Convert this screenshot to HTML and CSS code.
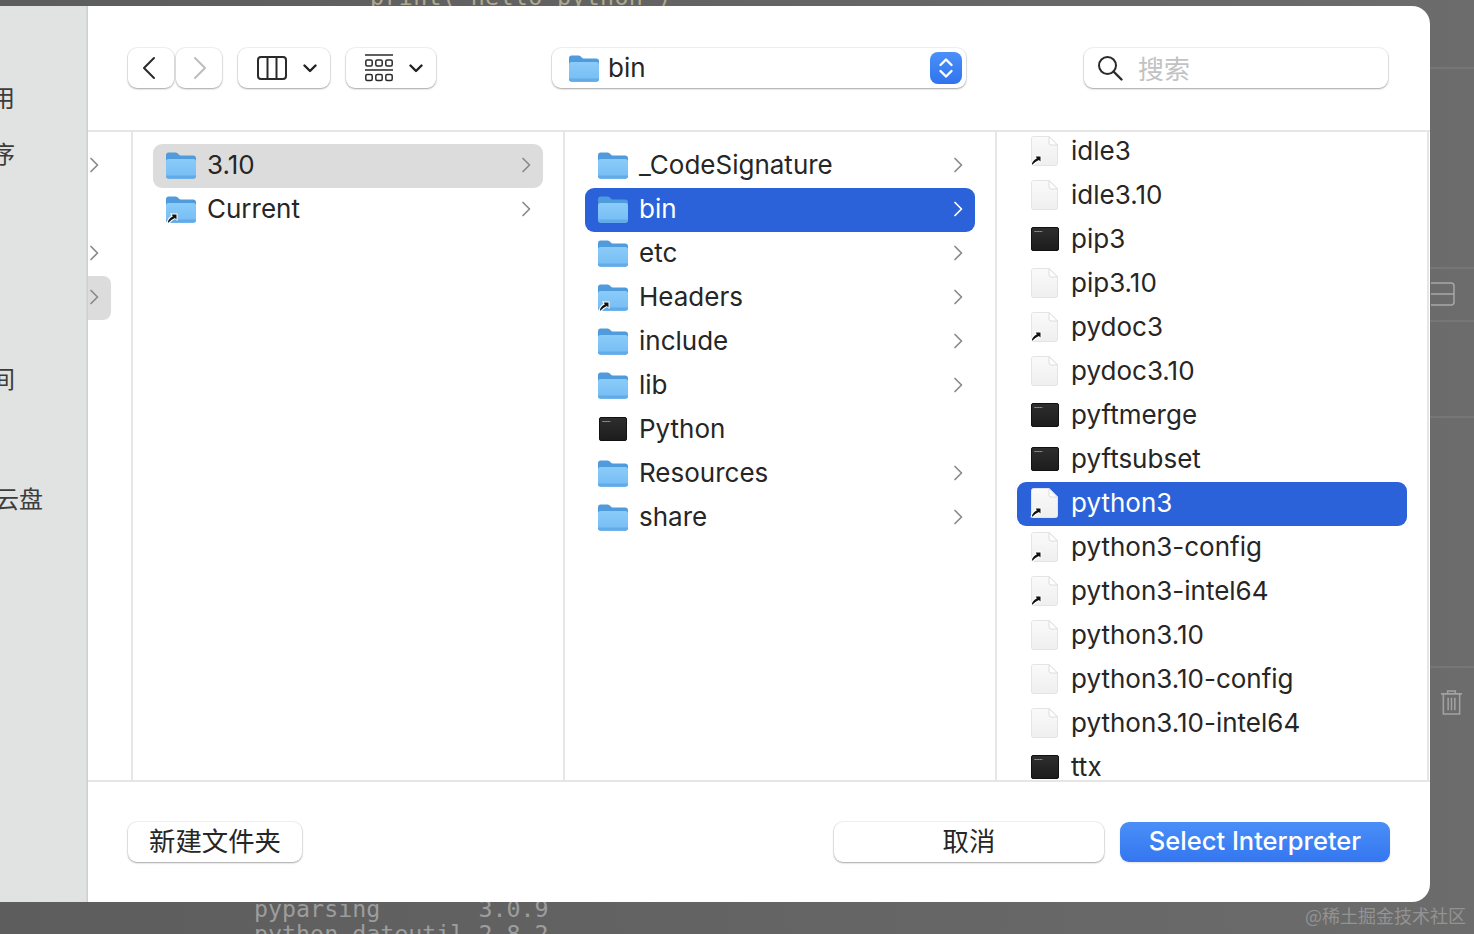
FILE: index.html
```html
<!DOCTYPE html>
<html lang="zh">
<head>
<meta charset="utf-8">
<title>Select Interpreter</title>
<link rel="stylesheet" href="styles.css">
</head>
<body>
<svg class="defs" width="0" height="0" aria-hidden="true">
  <defs>
    <linearGradient id="fg" x1="0" y1="0" x2="0" y2="1"><stop offset="0" stop-color="#8accf9"/><stop offset="1" stop-color="#75bcf4"/></linearGradient>
    <linearGradient id="pg" x1="0" y1="0" x2="0" y2="1"><stop offset="0" stop-color="#fafafa"/><stop offset="1" stop-color="#efefef"/></linearGradient>
    <linearGradient id="tg" x1="0" y1="0" x2="0" y2="1"><stop offset="0" stop-color="#2e2e2e"/><stop offset="1" stop-color="#1c1c1c"/></linearGradient>
    <symbol id="folder" viewBox="0 0 30 27">
      <path d="M0 3.500C0 1.500 1 .5 2.500.5h7c1.500 0 2 .8 3 1.800.8.800 1.500 1.200 3 1.200H27c2 0 3 1 3 3V12H0z" fill="#4f9bdc"/>
      <path d="M0 9.500C0 8 1 7 2.500 7h25C29 7 30 8 30 9.500V24c0 1.800-1 2.800-2.800 2.800H2.800C1 26.800 0 25.800 0 24z" fill="url(#fg)"/>
      <path d="M0 23.500h30v.8c0 1.600-1 2.500-2.800 2.500H2.800C1 26.800 0 25.900 0 24.300z" fill="#62abe6"/>
    </symbol>
    <symbol id="file" viewBox="0 0 28 30">
      <path d="M2.500.5H18l8.500 8.500v18.500a2 2 0 0 1-2 2h-22a2 2 0 0 1-2-2v-25a2 2 0 0 1 2-2z" fill="url(#pg)" stroke="#e4e4e4"/>
      <path d="M18 .5V7a2 2 0 0 0 2 2h6.500z" fill="#fff" stroke="#dcdcdc"/>
    </symbol>
    <symbol id="term" viewBox="0 0 28 24">
      <rect x=".5" y=".5" width="27" height="23" rx="1.500" fill="url(#tg)" stroke="#111"/>
      <path d="M3.500 4.500h8" stroke="#7fd07f" stroke-width="1.200" stroke-dasharray="1.300 .6"/>
    </symbol>
    <symbol id="alias" viewBox="0 0 12 12">
      <path d="M.5 11.500C1 7.500 3 5 5.500 3.800L4 1.500h7.500V9L9 7C7 8.200 5 9.500 3.500 11.500z" fill="#fff"/>
      <path d="M1.800 10.500C2.300 7.800 4 5.800 6.800 4.500L5.800 2.500h4.700v5L8.900 5.900C6.500 7 4 8.500 2.800 10.500z" fill="#111"/>
    </symbol>
    <symbol id="chev" viewBox="0 0 10 16">
      <path d="M2 1.500 8.500 8 2 14.500" fill="none" stroke="currentColor" stroke-width="1.700" stroke-linecap="round" stroke-linejoin="round"/>
    </symbol>
  </defs>
</svg>

<div class="desktop">
  <pre class="term term-top">print("hello python")</pre>
  <pre class="term term-bottom">pyparsing       3.0.9
python-dateutil 2.8.2</pre>
  <div class="rule rule-1"></div>
  <div class="rule rule-2"></div>
  <div class="rule rule-3"></div>
  <div class="rule rule-4"></div>
  <div class="rule rule-5"></div>
  <svg class="bg-split" viewBox="0 0 24 24"><path d="M0 1h20a3 3 0 0 1 3 3v16a3 3 0 0 1-3 3H0M0 12h23" fill="none" stroke="#a8a8a8" stroke-width="1.500"/></svg>
  <svg class="bg-trash" viewBox="0 0 24 28"><path d="M1 5h22M8 5V2h8v3M3.500 5v21h17V5M8.500 9v13M12 9v13M15.500 9v13" fill="none" stroke="#a2a2a2" stroke-width="1.600"/></svg>
  <div class="watermark">@稀土掘金技术社区</div>

  <aside class="sidebar">
    <div class="side-item side-a">用</div>
    <div class="side-item side-b">序</div>
    <div class="side-item side-c">间</div>
    <div class="side-item side-d">云盘</div>
  </aside>

  <main class="sheet">
    <header class="toolbar">
      <button class="btn nav nav-prev"><svg class="nav-ico" viewBox="0 0 14 24"><path d="M12 2 2 12l10 10" fill="none" stroke="#2a2a2a" stroke-width="2" stroke-linecap="round" stroke-linejoin="round"/></svg></button>
      <button class="btn nav nav-next"><svg class="nav-ico" viewBox="0 0 14 24"><path d="m2 2 10 10L2 22" fill="none" stroke="#bdbdbd" stroke-width="2" stroke-linecap="round" stroke-linejoin="round"/></svg></button>
      <button class="btn view">
        <svg class="view-ico" viewBox="0 0 30 24"><rect x="1" y="1" width="28" height="22" rx="3" fill="none" stroke="#2a2a2a" stroke-width="2"/><path d="M10.500 1v22M19.500 1v22" stroke="#2a2a2a" stroke-width="2"/></svg>
        <svg class="drop" viewBox="0 0 14 9"><path d="m1.500 1.500 5.500 5.500 5.500-5.500" fill="none" stroke="#222" stroke-width="2.400" stroke-linecap="round" stroke-linejoin="round"/></svg>
      </button>
      <button class="btn group">
        <svg class="group-ico" viewBox="0 0 28 28"><path d="M0 1h28M0 16h28" stroke="#2a2a2a" stroke-width="1.500"/><g fill="none" stroke="#2a2a2a" stroke-width="1.500"><rect x=".8" y="6" width="6.400" height="6" rx="1.500"/><rect x="10.800" y="6" width="6.400" height="6" rx="1.500"/><rect x="20.800" y="6" width="6.400" height="6" rx="1.500"/><rect x=".8" y="20.500" width="6.400" height="6" rx="1.500"/><rect x="10.800" y="20.500" width="6.400" height="6" rx="1.500"/><rect x="20.800" y="20.500" width="6.400" height="6" rx="1.500"/></g></svg>
        <svg class="drop" viewBox="0 0 14 9"><path d="m1.500 1.500 5.500 5.500 5.500-5.500" fill="none" stroke="#222" stroke-width="2.400" stroke-linecap="round" stroke-linejoin="round"/></svg>
      </button>
      <div class="btn popup">
        <svg class="ico-folder"><use href="#folder"/></svg>
        <span class="popup-label">bin</span>
        <span class="stepper"><svg viewBox="0 0 16 24"><path d="m2.500 9 5.500-5.500L13.500 9M2.500 15 8 20.500l5.500-5.500" fill="none" stroke="#fff" stroke-width="2.400" stroke-linecap="round" stroke-linejoin="round"/></svg></span>
      </div>
      <div class="btn search">
        <svg class="search-ico" viewBox="0 0 26 26"><circle cx="10.500" cy="10.500" r="8.500" fill="none" stroke="#2a2a2a" stroke-width="2"/><path d="m16.500 16.500 8 8" stroke="#2a2a2a" stroke-width="2.400" stroke-linecap="round"/></svg>
        <span class="search-ph">搜索</span>
      </div>
    </header>

    <section class="browser">
      <div class="col strip">
        <div class="strip-row"><svg class="chev"><use href="#chev"/></svg></div>
        <div class="strip-row"></div>
        <div class="strip-row"><svg class="chev"><use href="#chev"/></svg></div>
        <div class="strip-row strip-on"><svg class="chev"><use href="#chev"/></svg></div>
      </div>

      <div class="col">
        <div class="row row-dim"><span class="ico"><svg class="ico-folder"><use href="#folder"/></svg></span><span class="name">3.10</span><svg class="chev"><use href="#chev"/></svg></div>
        <div class="row"><span class="ico"><svg class="ico-folder"><use href="#folder"/></svg><svg class="badge"><use href="#alias"/></svg></span><span class="name">Current</span><svg class="chev"><use href="#chev"/></svg></div>
      </div>

      <div class="col">
        <div class="row"><span class="ico"><svg class="ico-folder"><use href="#folder"/></svg></span><span class="name">_CodeSignature</span><svg class="chev"><use href="#chev"/></svg></div>
        <div class="row row-on"><span class="ico"><svg class="ico-folder"><use href="#folder"/></svg></span><span class="name">bin</span><svg class="chev"><use href="#chev"/></svg></div>
        <div class="row"><span class="ico"><svg class="ico-folder"><use href="#folder"/></svg></span><span class="name">etc</span><svg class="chev"><use href="#chev"/></svg></div>
        <div class="row"><span class="ico"><svg class="ico-folder"><use href="#folder"/></svg><svg class="badge"><use href="#alias"/></svg></span><span class="name">Headers</span><svg class="chev"><use href="#chev"/></svg></div>
        <div class="row"><span class="ico"><svg class="ico-folder"><use href="#folder"/></svg></span><span class="name">include</span><svg class="chev"><use href="#chev"/></svg></div>
        <div class="row"><span class="ico"><svg class="ico-folder"><use href="#folder"/></svg></span><span class="name">lib</span><svg class="chev"><use href="#chev"/></svg></div>
        <div class="row"><span class="ico"><svg class="ico-term"><use href="#term"/></svg></span><span class="name">Python</span></div>
        <div class="row"><span class="ico"><svg class="ico-folder"><use href="#folder"/></svg></span><span class="name">Resources</span><svg class="chev"><use href="#chev"/></svg></div>
        <div class="row"><span class="ico"><svg class="ico-folder"><use href="#folder"/></svg></span><span class="name">share</span><svg class="chev"><use href="#chev"/></svg></div>
      </div>

      <div class="col col-scrolled">
        <div class="row"><span class="ico"><svg class="ico-file"><use href="#file"/></svg><svg class="badge"><use href="#alias"/></svg></span><span class="name">idle3</span></div>
        <div class="row"><span class="ico"><svg class="ico-file"><use href="#file"/></svg></span><span class="name">idle3.10</span></div>
        <div class="row"><span class="ico"><svg class="ico-term"><use href="#term"/></svg></span><span class="name">pip3</span></div>
        <div class="row"><span class="ico"><svg class="ico-file"><use href="#file"/></svg></span><span class="name">pip3.10</span></div>
        <div class="row"><span class="ico"><svg class="ico-file"><use href="#file"/></svg><svg class="badge"><use href="#alias"/></svg></span><span class="name">pydoc3</span></div>
        <div class="row"><span class="ico"><svg class="ico-file"><use href="#file"/></svg></span><span class="name">pydoc3.10</span></div>
        <div class="row"><span class="ico"><svg class="ico-term"><use href="#term"/></svg></span><span class="name">pyftmerge</span></div>
        <div class="row"><span class="ico"><svg class="ico-term"><use href="#term"/></svg></span><span class="name">pyftsubset</span></div>
        <div class="row row-on"><span class="ico"><svg class="ico-file"><use href="#file"/></svg><svg class="badge"><use href="#alias"/></svg></span><span class="name">python3</span></div>
        <div class="row"><span class="ico"><svg class="ico-file"><use href="#file"/></svg><svg class="badge"><use href="#alias"/></svg></span><span class="name">python3-config</span></div>
        <div class="row"><span class="ico"><svg class="ico-file"><use href="#file"/></svg><svg class="badge"><use href="#alias"/></svg></span><span class="name">python3-intel64</span></div>
        <div class="row"><span class="ico"><svg class="ico-file"><use href="#file"/></svg></span><span class="name">python3.10</span></div>
        <div class="row"><span class="ico"><svg class="ico-file"><use href="#file"/></svg></span><span class="name">python3.10-config</span></div>
        <div class="row"><span class="ico"><svg class="ico-file"><use href="#file"/></svg></span><span class="name">python3.10-intel64</span></div>
        <div class="row"><span class="ico"><svg class="ico-term"><use href="#term"/></svg></span><span class="name">ttx</span></div>
      </div>
    </section>

    <footer class="footer">
      <button class="btn foot foot-new">新建文件夹</button>
      <button class="btn foot foot-cancel">取消</button>
      <button class="btn foot foot-ok">Select Interpreter</button>
    </footer>
  </main>
</div>
</body>
</html>
```
FILE: styles.css
```css
* { box-sizing: border-box; }
html, body { margin: 0; padding: 0; }
body { font-family: Inter, "Noto Sans CJK SC", sans-serif; color: #262626; overflow: hidden; }
.defs { position: absolute; }
button { font: inherit; color: inherit; padding: 0; border: 0; }

.desktop {
  position: relative;
  width: 1474px;
  height: 934px;
  overflow: hidden;
  display: flex;
  padding-top: 6px;
  background: linear-gradient(90deg, #5d5d5d 0, #626262 40%, #6c6c6c 100%);
}

.term {
  position: absolute;
  margin: 0;
  font: 23.3px/25px "DejaVu Sans Mono", monospace;
  color: #9d9d9d;
}
.term-top { left: 370px; top: -16px; color: #b0a98c; letter-spacing: .35px; }
.term-bottom { left: 254px; top: 896px; }

.rule { position: absolute; left: 1430px; right: 0; height: 2px; background: #767676; }
.rule-1 { top: 67px; }
.rule-2 { top: 267px; }
.rule-3 { top: 320px; }
.rule-4 { top: 416px; }
.rule-5 { top: 666px; }
.bg-split { position: absolute; left: 1431px; top: 282px; width: 24px; height: 24px; }
.bg-trash { position: absolute; left: 1440px; top: 689px; width: 23px; height: 27px; }
.watermark {
  position: absolute;
  right: 8px;
  top: 904px;
  font: 18px/22px "Noto Sans CJK SC", sans-serif;
  color: #939393;
}

.sidebar {
  position: relative;
  flex: none;
  width: 88px;
  height: 896px;
  overflow: hidden;
  background: #e1e3e2;
  box-shadow: inset -2px 0 2px -1px rgba(0, 0, 0, .12);
}
.side-item {
  width: 120px;
  text-align: right;
  font: 24px/30px "Noto Sans CJK SC", sans-serif;
  color: #3c3c3c;
}
.side-a { margin: 76px 0 0 -105px; }
.side-b { margin: 26px 0 0 -105px; }
.side-c { margin: 195px 0 0 -105px; }
.side-d { margin: 90px 0 0 -77px; }

.sheet {
  position: relative;
  flex: none;
  width: 1342px;
  height: 896px;
  background: #fff;
  border-radius: 0 18px 18px 0;
  display: flex;
  flex-direction: column;
  overflow: hidden;
}

.toolbar {
  flex: none;
  height: 126px;
  border-bottom: 2px solid #e6e6e6;
  display: flex;
  align-items: center;
  padding: 0 0 0 40px;
}
.btn {
  display: flex;
  align-items: center;
  height: 40px;
  background: #fff;
  border-radius: 9px;
  box-shadow: 0 1px 2px rgba(0, 0, 0, .32), 0 0 0 1px rgba(0, 0, 0, .05);
}
.nav { width: 46px; justify-content: center; }
.nav-prev { padding-right: 4px; }
.nav-next { margin-left: 2px; padding-left: 2px; }
.nav-ico { width: 14px; height: 24px; }
.view { width: 92px; margin-left: 16px; padding-left: 19px; }
.view-ico { width: 30px; height: 24px; }
.drop { width: 14px; height: 9px; margin-left: 16px; }
.group { width: 90px; margin-left: 16px; padding-left: 19px; }
.group-ico { width: 28px; height: 28px; }
.group .drop { margin-left: 16px; }

.popup { width: 414px; margin-left: 116px; padding: 0 4px 0 17px; font-size: 26px; }
.popup-label { margin-left: 9px; padding-bottom: 2px; }
.stepper {
  margin-left: auto;
  width: 32px;
  height: 32px;
  border-radius: 8px;
  background: linear-gradient(#4b90f8, #2f74ee);
  display: flex;
  align-items: center;
  justify-content: center;
}
.stepper svg { width: 16px; height: 24px; }

.search { width: 304px; margin-left: 118px; padding-left: 13px; }
.search-ico { width: 26px; height: 26px; }
.search-ph { margin-left: 15px; font: 26px/1 "Noto Sans CJK SC", sans-serif; color: #c2c2c2; }

.browser { flex: none; height: 648px; display: flex; overflow: hidden; }
.col {
  flex: none;
  width: 432px;
  height: 648px;
  border-right: 2px solid #e6e6e6;
  padding: 12px 20px 0;
  overflow: hidden;
  font-size: 26px;
}
.strip { width: 45px; padding: 12px 0 0; }
.strip-row { width: 23px; height: 44px; display: flex; align-items: center; padding: 0 0 2px 1px; }
.strip-on { background: #dcdcdc; border-radius: 0 8px 8px 0; }
.col-scrolled { padding-top: 0; }
.col-scrolled .row:first-child { margin-top: -2px; }

.row {
  height: 44px;
  display: flex;
  align-items: center;
  padding: 0 12px 2px 13px;
  border-radius: 9px;
  white-space: nowrap;
}
.ico { position: relative; flex: none; width: 30px; height: 30px; margin-right: 11px; display: flex; align-items: center; }
.name { padding-bottom: 2px; }
.ico-folder { width: 30px; height: 27px; flex: none; }
.ico-file { width: 28px; height: 30px; margin-left: 1px; flex: none; }
.ico-term { width: 28px; height: 24px; margin-left: 1px; flex: none; }
.badge { position: absolute; left: 0; bottom: 0; width: 12px; height: 12px; }
.chev { flex: none; width: 10px; height: 16px; margin-left: auto; color: #8a8a8a; }
.strip-row .chev { margin-left: 0; }
.row-dim { background: #dcdcdc; }
.row-on { background: #2b62d9; color: #fff; }
.row-on .chev { color: #fff; }

.footer {
  flex: none;
  height: 122px;
  border-top: 2px solid #e6e6e6;
  display: flex;
  align-items: center;
  padding: 0 40px;
}
.foot { height: 40px; justify-content: center; padding-bottom: 3px; font: 26.4px/1 "Noto Sans CJK SC", sans-serif; }
.foot-new { width: 174px; margin-right: auto; }
.foot-cancel { width: 270px; }
.foot-ok {
  width: 270px;
  margin-left: 16px;
  padding-bottom: 2px;
  font: 500 25.5px/1 Inter, sans-serif;
  color: #fff;
  background: linear-gradient(#4a8ff8, #3476f0);
  box-shadow: 0 1px 2px rgba(0, 0, 0, .12);
}
```
